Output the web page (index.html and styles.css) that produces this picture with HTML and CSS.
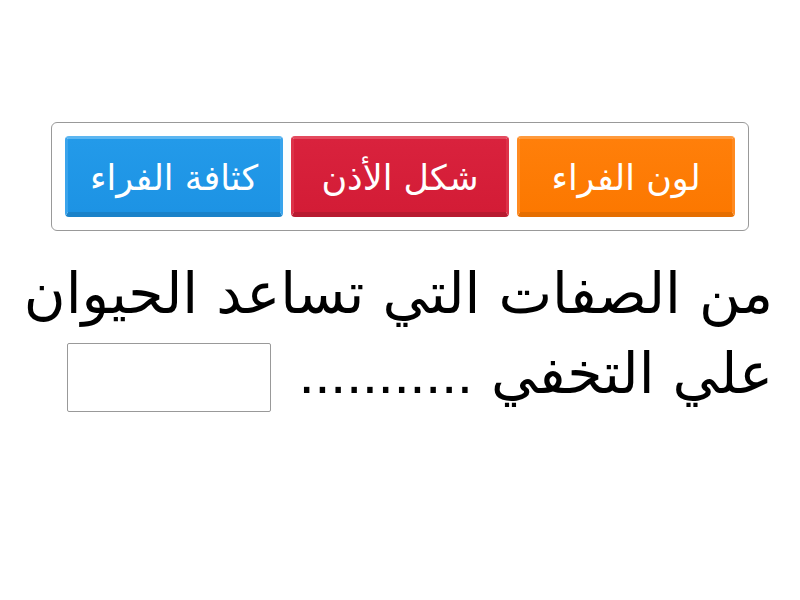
FILE: index.html
```html
<!DOCTYPE html>
<html lang="ar" dir="rtl">
<head>
<meta charset="utf-8">
<link rel="stylesheet" href="styles.css">
</head>
<body>
<div class="page">
  <div class="options">
    <div class="btn orange">لون الفراء</div>
    <div class="btn red">شكل الأذن</div>
    <div class="btn blue">كثافة الفراء</div>
  </div>
  <div class="question">
    <div class="line">من الصفات التي تساعد الحيوان</div>
    <div class="line">علي التخفي <span class="dots">...........</span> <span class="slot"></span></div>
  </div>
</div>
</body>
</html>
```
FILE: styles.css
```css
html, body { margin: 0; padding: 0; background: #fff; }
.page { width: 800px; height: 600px; padding-top: 122px; box-sizing: border-box; }
.options {
  margin: 0 51px;
  border: 1px solid #999;
  border-radius: 6px;
  padding: 13px;
  display: flex;
  gap: 8px;
}
.btn {
  width: 218px;
  height: 81px;
  box-sizing: border-box;
  border-radius: 4px;
  color: #fff;
  font-family: "DejaVu Sans", sans-serif;
  font-size: 35px;
  padding-top: 4px;
  display: flex;
  align-items: center;
  justify-content: center;
  border-style: solid;
  border-width: 3px 3px 5px 3px;
}
.orange { background: linear-gradient(#ff7f0a, #fc7800); border-color: #ff9a3c #ff8a20 #e56e00 #ff8a20; }
.red { background: linear-gradient(#d9223d, #d31c36); border-color: #e44a5e #dd3249 #b81a30 #dd3249; }
.blue { background: linear-gradient(#239ae9, #1d93e4); border-color: #5cb6f1 #3aa4ec #1a82c9 #3aa4ec; }
.question {
  margin-top: 22px;
  padding: 0 27px 0 20px;
  font-family: "DejaVu Sans", sans-serif;
  font-size: 57px;
  color: #000;
  line-height: 80px;
}
.dots { font-family: "Liberation Sans", sans-serif; }
.slot {
  display: inline-block;
  width: 204px;
  height: 69px;
  box-sizing: border-box;
  border: 1px solid #999;
  border-radius: 2px;
  vertical-align: middle;
  margin-right: 10px;
}
```
